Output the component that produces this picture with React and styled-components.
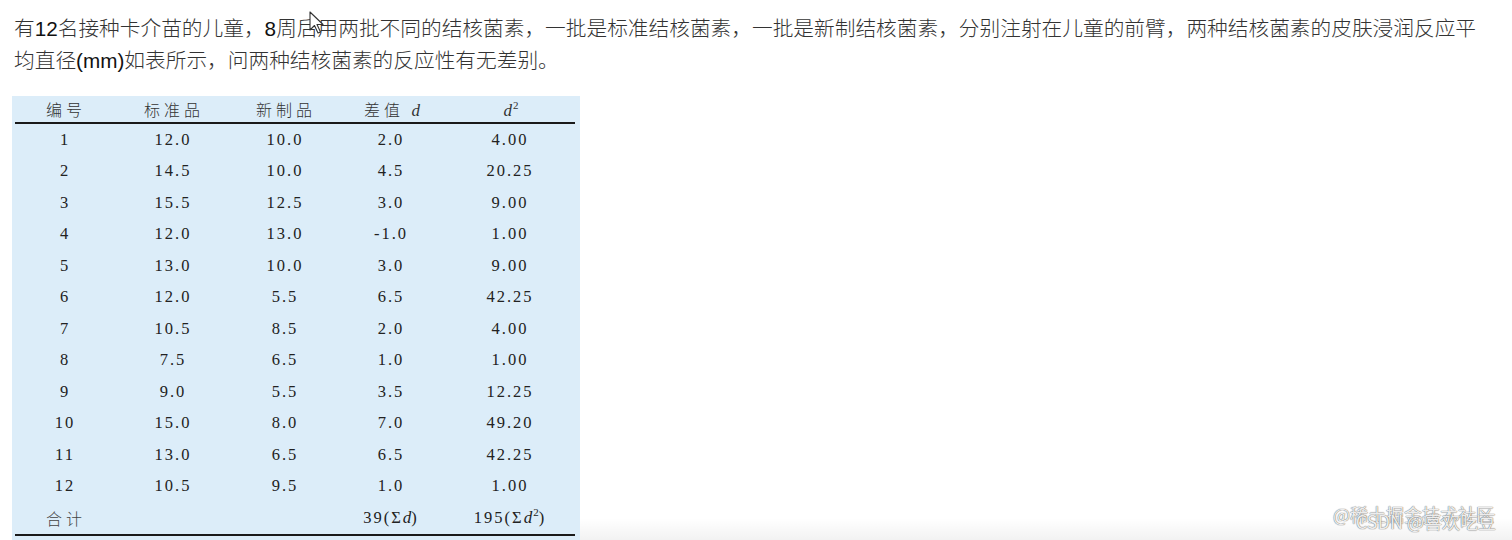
import styled, { createGlobalStyle } from 'styled-components'

const Global = createGlobalStyle`
  html, body {
    margin: 0;
    background: #fff;
  }
  body {
    width: 1512px;
    height: 540px;
    overflow: hidden;
  }
`

const rows = [
  ['1', '12.0', '10.0', '2.0', '4.00'],
  ['2', '14.5', '10.0', '4.5', '20.25'],
  ['3', '15.5', '12.5', '3.0', '9.00'],
  ['4', '12.0', '13.0', '-1.0', '1.00'],
  ['5', '13.0', '10.0', '3.0', '9.00'],
  ['6', '12.0', '5.5', '6.5', '42.25'],
  ['7', '10.5', '8.5', '2.0', '4.00'],
  ['8', '7.5', '6.5', '1.0', '1.00'],
  ['9', '9.0', '5.5', '3.5', '12.25'],
  ['10', '15.0', '8.0', '7.0', '49.20'],
  ['11', '13.0', '6.5', '6.5', '42.25'],
  ['12', '10.5', '9.5', '1.0', '1.00'],
]

export default function App() {
  return (
    <>
      <Global />
      <Page>
        <Question>
          有<Num>12</Num>名接种卡介苗的儿童，<Num>8</Num>周后用两批不同的结核菌素，一批是标准结核菌素，一批是新制结核菌素，分别注射在儿童的前臂，两种结核菌素的皮肤浸润反应平均直径<Num>(mm)</Num>如表所示，问两种结核菌素的反应性有无差别。
        </Question>

        <TableCard>
          <Grid>
            <Head>编号</Head>
            <Head>标准品</Head>
            <Head>新制品</Head>
            <Head><span>差值 <Var>d</Var></span></Head>
            <Head><span><Var>d</Var><Sup>2</Sup></span></Head>
            <Rule />
            {rows.map((r, i) =>
              r.map((v, j) => <Cell key={i + '-' + j}>{v}</Cell>)
            )}
            <Cell cjk>合计</Cell>
            <Cell />
            <Cell />
            <Cell><span>39(Σ<Var>d</Var>)</span></Cell>
            <Cell><span>195(Σ<Var>d</Var><Sup>2</Sup>)</span></Cell>
            <Rule />
          </Grid>
        </TableCard>

        <Cursor width="18" height="24" viewBox="0 0 18 24">
          <path d="M1 1 L1 19 L5.5 14.5 L9 22 L11.5 21 L8 13.5 L14 13.5 Z" fill="#fff" stroke="#333" strokeWidth="1.1" strokeLinejoin="round" />
        </Cursor>

        <BottomShade />
        <Watermark top={504} right={18}>@稀土掘金技术社区</Watermark>
        <Watermark top={511} right={16}>CSDN @喜欢吃豆</Watermark>
      </Page>
    </>
  )
}

const Page = styled.div`
  position: relative;
  width: 1512px;
  height: 540px;
  padding: 12px 0 0 12px;
  box-sizing: border-box;
  overflow: hidden;
`

const Question = styled.p`
  margin: 0;
  padding-left: 2px;
  width: 1472px;
  font-family: "Noto Sans CJK SC", "Liberation Sans", sans-serif;
  font-size: 20.7px;
  line-height: 31px;
  color: #333;
  font-weight: 300;
`

const Num = styled.span`
  font-family: "Liberation Sans", Arial, sans-serif;
  font-weight: 400;
  color: #111;
`

const TableCard = styled.div`
  margin-top: 20px;
  width: 568px;
  height: 462px;
  padding: 0 5px 0 3px;
  box-sizing: border-box;
  background: #dcedf9;
`

const Grid = styled.div`
  display: grid;
  grid-template-columns: 98px 118px 106px 106px 132px;
  grid-template-rows: 26px 2px repeat(13, 31.5px) 2px;
  font-family: "Liberation Serif", "Times New Roman", serif;
  color: #222;
`

const Head = styled.div`
  display: flex;
  align-items: center;
  justify-content: center;
  padding-left: 4px;
  font-family: "Noto Sans CJK SC", sans-serif;
  font-weight: 300;
  font-size: 16px;
  letter-spacing: 4px;
  color: #333;
`

const Rule = styled.div`
  grid-column: 1 / -1;
  background: #1a1a1a;
`

const Cell = styled.div`
  display: flex;
  align-items: center;
  justify-content: center;
  padding-left: ${p => (p.cjk ? '4px' : '2px')};
  font-size: ${p => (p.cjk ? '16px' : '16.5px')};
  letter-spacing: ${p => (p.cjk ? '4px' : '2px')};
  font-family: ${p => (p.cjk ? '"Noto Sans CJK SC", sans-serif' : '"Liberation Serif", serif')};
  font-weight: ${p => (p.cjk ? 300 : 400)};
  color: ${p => (p.cjk ? '#444' : '#222')};
`

const Var = styled.i`
  font-family: "Liberation Serif", serif;
  font-size: 17px;
  letter-spacing: 0;
`

const Sup = styled.span`
  position: relative;
  top: -7px;
  margin-left: 1px;
  font-size: 11px;
  font-family: "Liberation Serif", serif;
  letter-spacing: 0;
`

const Cursor = styled.svg`
  position: absolute;
  left: 309px;
  top: 11px;
`

const BottomShade = styled.div`
  position: absolute;
  left: 580px;
  right: 0;
  bottom: 0;
  height: 22px;
  background: linear-gradient(to bottom, rgba(0, 0, 0, 0), rgba(0, 0, 0, 0.05));
`

const Watermark = styled.div`
  position: absolute;
  top: ${p => p.top}px;
  right: ${p => p.right}px;
  font-family: "Noto Sans CJK SC", sans-serif;
  font-size: 18px;
  line-height: 20px;
  color: rgba(255, 255, 255, 0.9);
  text-shadow: 0 0 1px #666, 0 0 1px #888;
  white-space: nowrap;
`
